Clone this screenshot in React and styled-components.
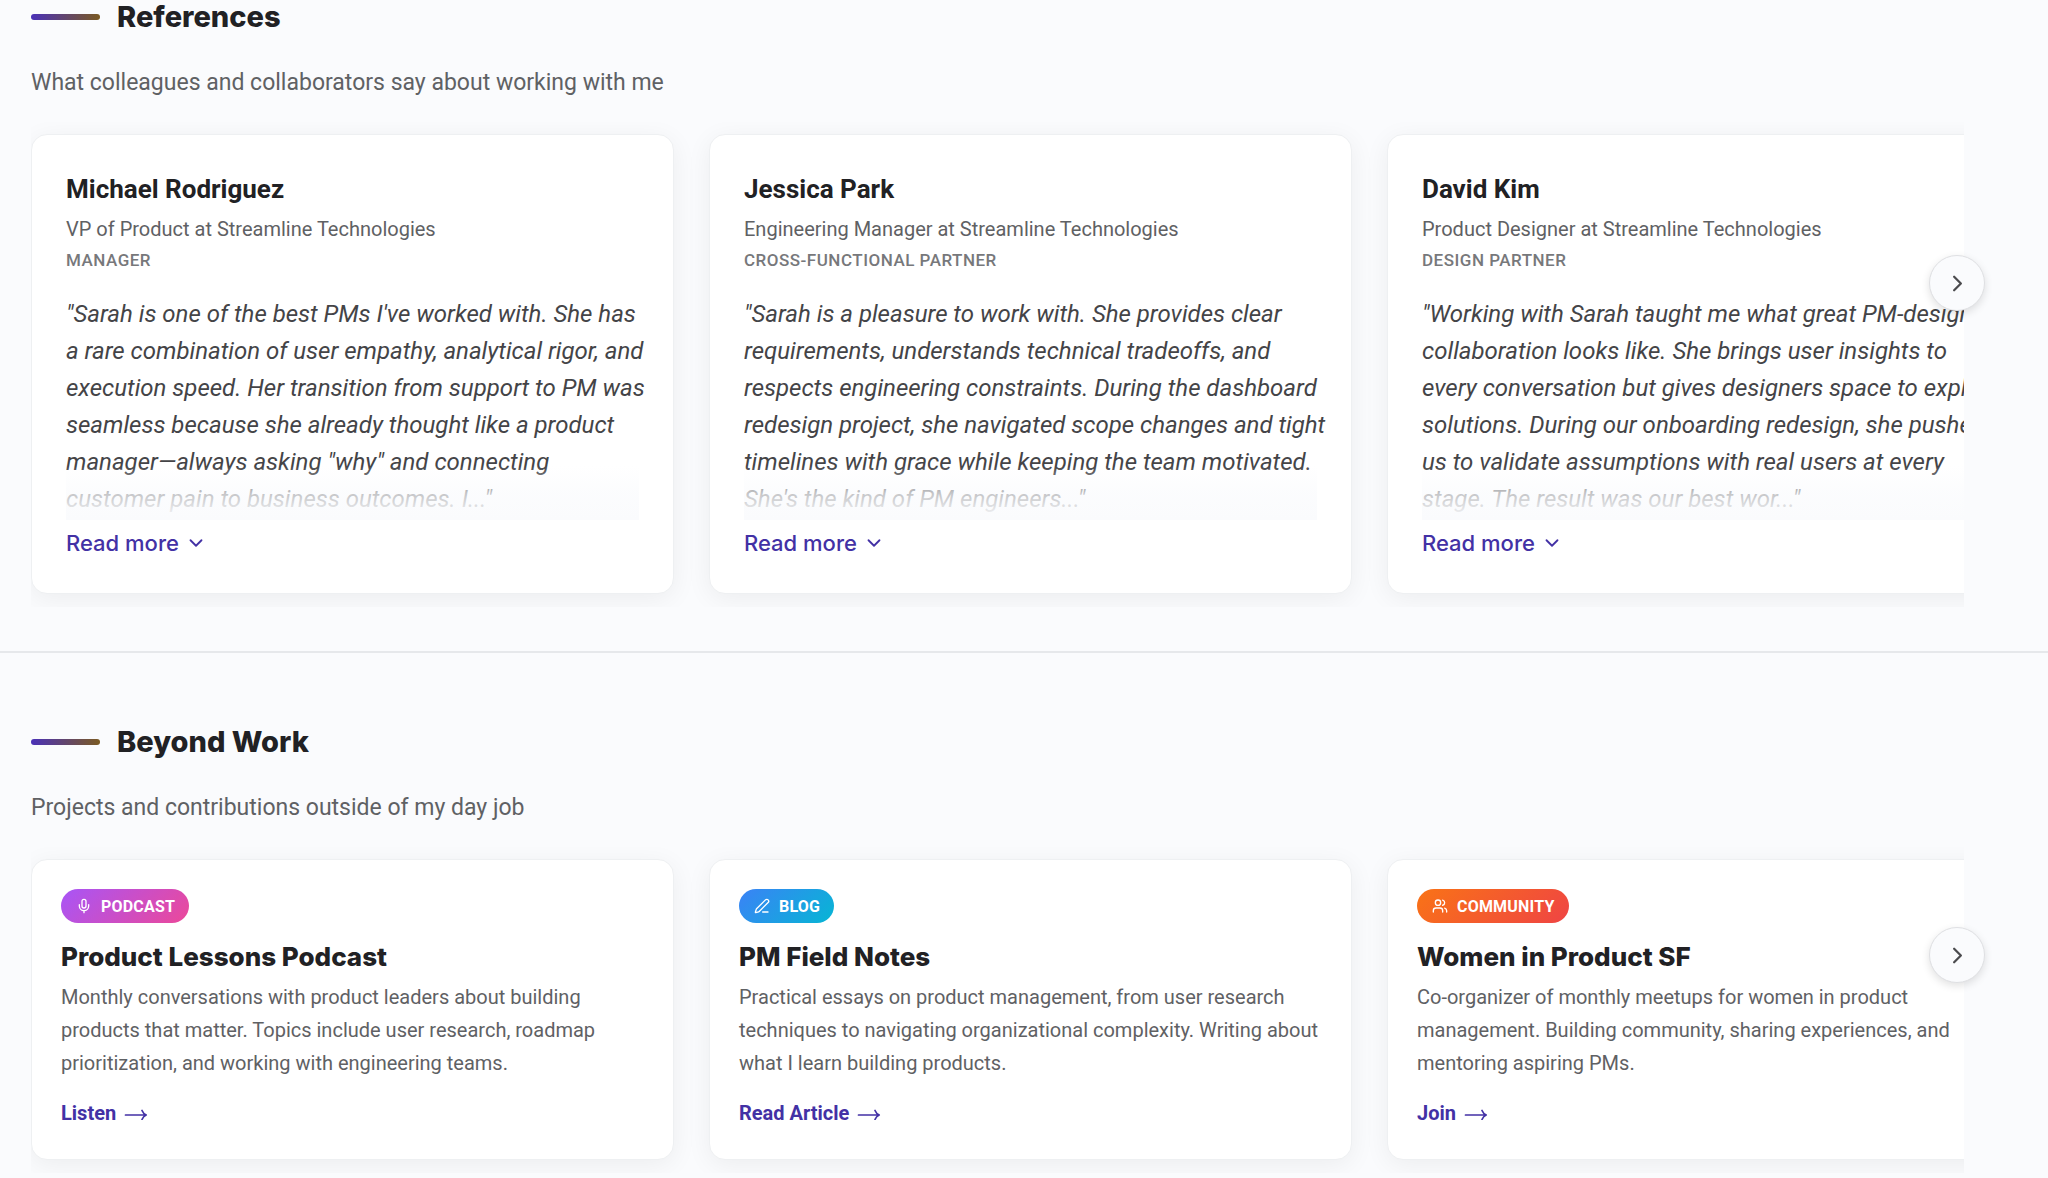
import React from 'react';
import styled, { createGlobalStyle } from 'styled-components';
import { ChevronDown, ChevronRight, Mic, PenLine, Users } from 'lucide-react';

const GlobalStyle = createGlobalStyle`
  * { box-sizing: border-box; }

  body {
    margin: 0;
    background: #fafbfd;
    color: #212124;
    font-family: Roboto, 'Liberation Sans', sans-serif;
    overflow-x: hidden;
  }

  h2, h3, p, blockquote { margin: 0; }
`;

const display = `Inter, 'Open Sans', sans-serif`;

// --- Sections ---

const Section = styled.section`
  padding: ${props => (props.$first ? '0' : '72px')} 84px 44px 31px;

  & + & { border-top: 2px solid #e6e8eb; }
`;

const SectionHead = styled.div`
  display: flex;
  align-items: center;
  gap: 17px;
`;

const Accent = styled.span`
  width: 69px;
  height: 6px;
  border-radius: 3px;
  background: linear-gradient(90deg, #4a31b8, #7a5a22);
`;

const SectionTitle = styled.h2`
  font-family: ${display};
  font-size: 29px;
  line-height: 34px;
  font-weight: 800;
`;

const Subtitle = styled.p`
  margin-top: 33px;
  font-size: 23px;
  line-height: 32px;
  color: #5f6164;
`;

// --- Carousel ---

const Carousel = styled.div`
  position: relative;
  margin-top: 23px;
`;

const Track = styled.div`
  display: flex;
  gap: 35px;
  padding: 12px 0 13px;
  overflow: hidden;
`;

const Card = styled.article`
  flex: 0 0 643px;
  padding: ${props => props.$pad};
  background: #fff;
  border: 1px solid #eef0f2;
  border-radius: 16px;
  box-shadow: 0 5px 26px rgba(0, 0, 0, 0.06);
`;

const NextButton = styled.button`
  position: absolute;
  right: -21px;
  top: ${props => props.$top};
  width: 56px;
  height: 56px;
  display: flex;
  align-items: center;
  justify-content: center;
  padding: 0;
  color: #4b4b4e;
  background: #fafbfd;
  border: 1px solid #dfe0e3;
  border-radius: 50%;
  box-shadow: 0 3px 9px rgba(0, 0, 0, 0.12);
  cursor: pointer;
`;

// --- Reference cards ---

const Name = styled.h3`
  font-size: 26px;
  line-height: 36px;
  font-weight: 700;
`;

const Role = styled.p`
  margin-top: 6px;
  font-size: 20px;
  line-height: 32px;
  color: #5f6164;
`;

const Relation = styled.p`
  font-size: 17px;
  line-height: 31px;
  font-weight: 500;
  letter-spacing: 0.5px;
  text-transform: uppercase;
  color: #77787b;
`;

const Quote = styled.blockquote`
  position: relative;
  margin: 20px -10px 0 0;
  height: 224px;
  overflow: hidden;
  font-size: 24px;
  line-height: 37px;
  font-style: italic;
  color: #444447;

  &::after {
    content: '';
    position: absolute;
    inset: auto 10px 0 0;
    height: 54px;
    background: linear-gradient(rgba(250, 251, 253, 0), rgba(250, 251, 253, 0.7) 50%, #fafbfd);
  }
`;

const ReadMore = styled.button`
  display: flex;
  align-items: center;
  gap: 6px;
  margin-top: 7px;
  padding: 0;
  border: none;
  background: none;
  color: #4331a5;
  font-family: ${display};
  font-size: 22px;
  line-height: 32px;
  font-weight: 500;
  cursor: pointer;
`;

// --- Project cards ---

const Badge = styled.span`
  display: inline-flex;
  align-items: center;
  gap: 9px;
  height: 34px;
  padding: 0 14px 0 15px;
  border-radius: 17px;
  color: #fff;
  background: ${props => props.$fill};
  font-size: 16px;
  font-weight: 700;
  letter-spacing: 0.2px;
  text-transform: uppercase;
`;

const ProjectTitle = styled.h3`
  margin-top: 17px;
  font-family: ${display};
  font-size: 26px;
  line-height: 34px;
  font-weight: 800;
`;

const Description = styled.p`
  margin-top: 7px;
  font-size: 20px;
  line-height: 33px;
  color: #5f6164;
`;

const ProjectLink = styled.a`
  display: inline-flex;
  align-items: center;
  gap: 8px;
  margin-top: 17px;
  color: #4331a5;
  font-size: 20px;
  line-height: 32px;
  font-weight: 700;
  text-decoration: none;
`;

const LongArrow = () => (
  <svg width="24" height="14" viewBox="0 0 24 14" fill="none" stroke="currentColor" strokeWidth="1.7" strokeLinecap="round" strokeLinejoin="round" aria-hidden="true">
    <path d="M1.500 9h20.500M18 4.500c.8 2 2.200 3.600 4.200 4.500-2 .9-3.400 2.500-4.200 4.500" />
  </svg>
);

const references = [
  {
    name: 'Michael Rodriguez',
    role: 'VP of Product at Streamline Technologies',
    relation: 'Manager',
    quote: `"Sarah is one of the best PMs I've worked with. She has a rare combination of user empathy, analytical rigor, and execution speed. Her transition from support to PM was seamless because she already thought like a product manager—always asking "why" and connecting customer pain to business outcomes. I..."`,
  },
  {
    name: 'Jessica Park',
    role: 'Engineering Manager at Streamline Technologies',
    relation: 'Cross-functional partner',
    quote: `"Sarah is a pleasure to work with. She provides clear requirements, understands technical tradeoffs, and respects engineering constraints. During the dashboard redesign project, she navigated scope changes and tight timelines with grace while keeping the team motivated. She's the kind of PM engineers..."`,
  },
  {
    name: 'David Kim',
    role: 'Product Designer at Streamline Technologies',
    relation: 'Design partner',
    quote: `"Working with Sarah taught me what great PM-design collaboration looks like. She brings user insights to every conversation but gives designers space to explore solutions. During our onboarding redesign, she pushed us to validate assumptions with real users at every stage. The result was our best wor..."`,
  },
];

const projects = [
  {
    kind: 'Podcast',
    icon: Mic,
    fill: 'linear-gradient(135deg, #a855f7, #ec4899)',
    title: 'Product Lessons Podcast',
    text: 'Monthly conversations with product leaders about building products that matter. Topics include user research, roadmap prioritization, and working with engineering teams.',
    action: 'Listen',
  },
  {
    kind: 'Blog',
    icon: PenLine,
    fill: 'linear-gradient(135deg, #3b82f6, #06b6d4)',
    title: 'PM Field Notes',
    text: 'Practical essays on product management, from user research techniques to navigating organizational complexity. Writing about what I learn building products.',
    action: 'Read Article',
  },
  {
    kind: 'Community',
    icon: Users,
    fill: 'linear-gradient(135deg, #f97316, #ef4444)',
    title: 'Women in Product SF',
    text: 'Co-organizer of monthly meetups for women in product management. Building community, sharing experiences, and mentoring aspiring PMs.',
    action: 'Join',
  },
];

export default function App() {
  return (
    <main>
      <GlobalStyle />

      <Section $first>
        <SectionHead>
          <Accent />
          <SectionTitle>References</SectionTitle>
        </SectionHead>
        <Subtitle>What colleagues and collaborators say about working with me</Subtitle>
        <Carousel>
          <Track>
            {references.map(item => (
              <Card key={item.name} $pad="36px 34px 34px">
                <Name>{item.name}</Name>
                <Role>{item.role}</Role>
                <Relation>{item.relation}</Relation>
                <Quote>{item.quote}</Quote>
                <ReadMore type="button">
                  Read more
                  <ChevronDown size={22} strokeWidth={2} />
                </ReadMore>
              </Card>
            ))}
          </Track>
          <NextButton type="button" aria-label="Next reference" $top="133px">
            <ChevronRight size={27} />
          </NextButton>
        </Carousel>
      </Section>

      <Section>
        <SectionHead>
          <Accent />
          <SectionTitle>Beyond Work</SectionTitle>
        </SectionHead>
        <Subtitle>Projects and contributions outside of my day job</Subtitle>
        <Carousel>
          <Track>
            {projects.map(({ icon: Icon, ...item }) => (
              <Card key={item.title} $pad="29px 29px 30px">
                <Badge $fill={item.fill}>
                  <Icon size={16} strokeWidth={2} />
                  {item.kind}
                </Badge>
                <ProjectTitle>{item.title}</ProjectTitle>
                <Description>{item.text}</Description>
                <ProjectLink href="#">
                  {item.action}
                  <LongArrow />
                </ProjectLink>
              </Card>
            ))}
          </Track>
          <NextButton type="button" aria-label="Next project" $top="80px">
            <ChevronRight size={27} />
          </NextButton>
        </Carousel>
      </Section>
    </main>
  );
}
